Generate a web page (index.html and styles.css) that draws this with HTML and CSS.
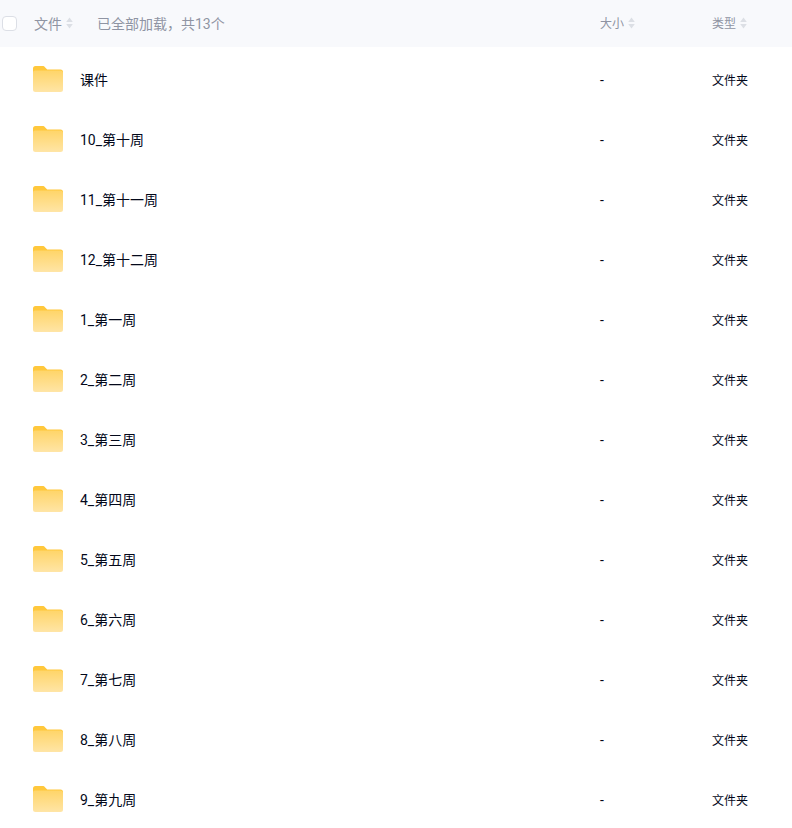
FILE: index.html
```html
<!DOCTYPE html>
<html lang="zh-CN">
<head>
    <meta charset="UTF-8">
    <title>文件列表</title>
    <link rel="stylesheet" href="styles.css">
</head>
<body>
    <svg class="svg-defs" width="0" height="0">
        <defs>
            <linearGradient id="folder-front" x1="0" y1="0" x2="0" y2="1">
                <stop offset="0" stop-color="#ffd569"/>
                <stop offset="1" stop-color="#ffe5a6"/>
            </linearGradient>
            <symbol id="folder" viewBox="0 0 30 26">
                <path d="M2.5 0H9.5c1.2 0 1.9.5 2.7 1.4L14.2 3.5H27.5A2.5 2.5 0 0 1 30 6v4H0V2.5A2.5 2.5 0 0 1 2.5 0z" fill="#ffc83c"/>
                <path d="M2 4.5H27.5A2.5 2.5 0 0 1 30 7V23.5A2.5 2.5 0 0 1 27.5 26H2.5A2.5 2.5 0 0 1 0 23.5V6.5A2 2 0 0 1 2 4.5z" fill="url(#folder-front)"/>
            </symbol>
            <symbol id="sort" viewBox="0 0 7 12">
                <path d="M3.5 0.5L6.8 5H0.2z M3.5 11.5L0.2 7H6.8z" fill="#dcdfe5"/>
            </symbol>
        </defs>
    </svg>

    <div class="file-table">
        <div class="table-head">
            <span class="check-box"></span>
            <div class="col-name">
                <span class="head-title">文件</span>
                <svg class="sort-icon"><use href="#sort"/></svg>
                <span class="load-note">已全部加载，共13个</span>
            </div>
            <div class="col-size">
                <span class="head-title">大小</span>
                <svg class="sort-icon"><use href="#sort"/></svg>
            </div>
            <div class="col-type">
                <span class="head-title">类型</span>
                <svg class="sort-icon"><use href="#sort"/></svg>
            </div>
        </div>

        <div class="file-list">
            <div class="file-row">
                <div class="col-name"><svg class="folder-icon"><use href="#folder"/></svg><span class="file-name">课件</span></div>
                <div class="col-size">-</div>
                <div class="col-type">文件夹</div>
            </div>
            <div class="file-row">
                <div class="col-name"><svg class="folder-icon"><use href="#folder"/></svg><span class="file-name">10_第十周</span></div>
                <div class="col-size">-</div>
                <div class="col-type">文件夹</div>
            </div>
            <div class="file-row">
                <div class="col-name"><svg class="folder-icon"><use href="#folder"/></svg><span class="file-name">11_第十一周</span></div>
                <div class="col-size">-</div>
                <div class="col-type">文件夹</div>
            </div>
            <div class="file-row">
                <div class="col-name"><svg class="folder-icon"><use href="#folder"/></svg><span class="file-name">12_第十二周</span></div>
                <div class="col-size">-</div>
                <div class="col-type">文件夹</div>
            </div>
            <div class="file-row">
                <div class="col-name"><svg class="folder-icon"><use href="#folder"/></svg><span class="file-name">1_第一周</span></div>
                <div class="col-size">-</div>
                <div class="col-type">文件夹</div>
            </div>
            <div class="file-row">
                <div class="col-name"><svg class="folder-icon"><use href="#folder"/></svg><span class="file-name">2_第二周</span></div>
                <div class="col-size">-</div>
                <div class="col-type">文件夹</div>
            </div>
            <div class="file-row">
                <div class="col-name"><svg class="folder-icon"><use href="#folder"/></svg><span class="file-name">3_第三周</span></div>
                <div class="col-size">-</div>
                <div class="col-type">文件夹</div>
            </div>
            <div class="file-row">
                <div class="col-name"><svg class="folder-icon"><use href="#folder"/></svg><span class="file-name">4_第四周</span></div>
                <div class="col-size">-</div>
                <div class="col-type">文件夹</div>
            </div>
            <div class="file-row">
                <div class="col-name"><svg class="folder-icon"><use href="#folder"/></svg><span class="file-name">5_第五周</span></div>
                <div class="col-size">-</div>
                <div class="col-type">文件夹</div>
            </div>
            <div class="file-row">
                <div class="col-name"><svg class="folder-icon"><use href="#folder"/></svg><span class="file-name">6_第六周</span></div>
                <div class="col-size">-</div>
                <div class="col-type">文件夹</div>
            </div>
            <div class="file-row">
                <div class="col-name"><svg class="folder-icon"><use href="#folder"/></svg><span class="file-name">7_第七周</span></div>
                <div class="col-size">-</div>
                <div class="col-type">文件夹</div>
            </div>
            <div class="file-row">
                <div class="col-name"><svg class="folder-icon"><use href="#folder"/></svg><span class="file-name">8_第八周</span></div>
                <div class="col-size">-</div>
                <div class="col-type">文件夹</div>
            </div>
            <div class="file-row">
                <div class="col-name"><svg class="folder-icon"><use href="#folder"/></svg><span class="file-name">9_第九周</span></div>
                <div class="col-size">-</div>
                <div class="col-type">文件夹</div>
            </div>
        </div>
    </div>
</body>
</html>
```

FILE: styles.css
```css
html, body {
    height: 100%;
    overflow: hidden;
}

body {
    margin: 0;
    background-color: #fff;
    color: #03081a;
    font-family: Roboto, "Noto Sans CJK SC", sans-serif;
    font-size: 14px;
}

.svg-defs {
    display: block;
    height: 0;
}

.table-head,
.file-row {
    display: grid;
    grid-template-columns: 600px 112px 80px;
    align-items: center;
}

.table-head {
    position: relative;
    height: 45px;
    padding-bottom: 2px;
    background-color: #f8f9fc;
    color: #8f94a3;
}

.table-head .col-size,
.table-head .col-type {
    font-size: 12px;
}

.check-box {
    position: absolute;
    left: 2px;
    top: 16px;
    width: 13px;
    height: 13px;
    background-color: #fff;
    border: 1px solid #dcdfe6;
    border-radius: 4px;
}

.table-head .col-name {
    padding-left: 34px;
}

.col-name {
    display: flex;
    align-items: center;
}

.col-size,
.col-type {
    display: flex;
    align-items: center;
}

.sort-icon {
    width: 7px;
    height: 12px;
    margin-left: 4px;
}

.load-note {
    margin-left: 24px;
}

.file-list {
    padding-top: 2px;
}

.file-row {
    height: 60px;
}

.file-row .col-name {
    padding-left: 33px;
}

.file-row .col-size {
    padding-top: 2px;
}

.folder-icon {
    width: 30px;
    height: 26px;
    flex-shrink: 0;
}

.file-name {
    margin-left: 17px;
}

.file-row .col-type {
    font-size: 12px;
}
```
